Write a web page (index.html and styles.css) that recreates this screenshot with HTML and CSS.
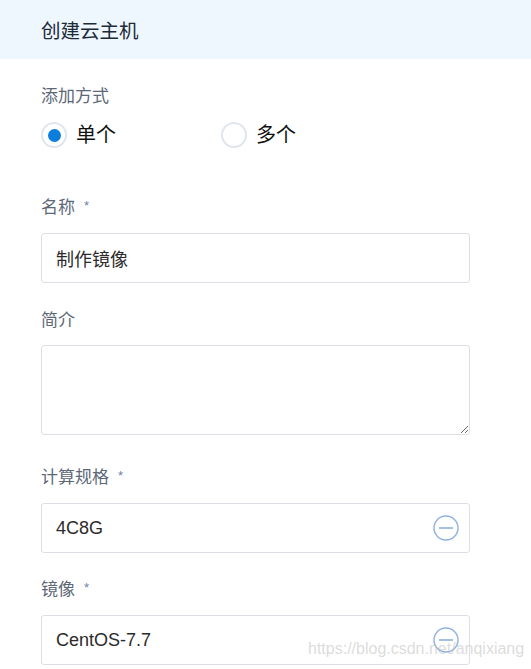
FILE: index.html
```html
<!DOCTYPE html>
<html lang="zh-CN">
<head>
<meta charset="utf-8">
<title>创建云主机</title>
<link rel="stylesheet" href="styles.css">
</head>
<body>
<div class="page">
  <header class="header">创建云主机</header>
  <main class="form">
    <div class="group group-mode">
      <div class="label">添加方式</div>
      <div class="radios">
        <label class="radio checked"><span class="dot"></span><span class="radio-text">单个</span></label>
        <label class="radio"><span class="dot"></span><span class="radio-text">多个</span></label>
      </div>
    </div>
    <div class="group group-name">
      <div class="label">名称<span class="req">*</span></div>
      <div class="input"><span class="value">制作镜像</span></div>
    </div>
    <div class="group group-desc">
      <div class="label">简介</div>
      <textarea class="textarea"></textarea>
    </div>
    <div class="group">
      <div class="label">计算规格<span class="req">*</span></div>
      <div class="input"><span class="value">4C8G</span>
        <svg class="minus" width="26" height="26" viewBox="0 0 26 26"><circle cx="13" cy="13" r="12" fill="none" stroke="#8fb1e2" stroke-width="1.4"/><line x1="6" y1="13" x2="20" y2="13" stroke="#8fb1e2" stroke-width="1.6"/></svg>
      </div>
    </div>
    <div class="group">
      <div class="label">镜像<span class="req">*</span></div>
      <div class="input"><span class="value">CentOS-7.7</span>
        <svg class="minus" width="26" height="26" viewBox="0 0 26 26"><circle cx="13" cy="13" r="12" fill="none" stroke="#8fb1e2" stroke-width="1.4"/><line x1="6" y1="13" x2="20" y2="13" stroke="#8fb1e2" stroke-width="1.6"/></svg>
      </div>
    </div>
  </main>
  <div class="watermark">https://blog.csdn.net/anqixiang</div>
</div>
</body>
</html>
```
FILE: styles.css
```css
* { box-sizing: border-box; }
html, body { margin: 0; padding: 0; background: #fff; }
body {
  font-family: "Liberation Sans", "Noto Sans CJK SC", sans-serif;
  color: #333;
  overflow: hidden;
}
.page { position: relative; width: 531px; height: 669px; overflow: hidden; }
.header {
  height: 59px;
  background: #eef6fe;
  padding-left: 41px;
  display: flex;
  align-items: center;
  font-size: 19.5px;
  color: #1d2a38;
}
.form { padding: 0 41px; width: 511px; }
.group { margin-top: 25px; }
.group-mode { margin-top: 26px; }
.group-name { margin-top: 49px; }
.group-desc { margin-top: 26px; }
.group-desc .label { margin-bottom: 12px; }
.group-desc + .group { margin-top: 31px; }
.label {
  font-size: 17px;
  line-height: 24px;
  height: 24px;
  color: #5d6877;
  margin-bottom: 13px;
  display: flex;
  align-items: flex-start;
}
.req {
  font-size: 13px;
  line-height: 14px;
  color: #6f80a6;
  margin-left: 9px;
  margin-top: 3px;
}
.group-mode .label { margin-bottom: 14px; }
.radios { display: flex; height: 24px; }
.radio { width: 180px; display: flex; align-items: center; gap: 9px; }
.dot {
  width: 26px;
  height: 26px;
  border-radius: 50%;
  border: 2px solid #e0e6ee;
  display: flex;
  align-items: center;
  justify-content: center;
  flex: none;
}
.radio.checked .dot::after {
  content: "";
  width: 13px;
  height: 13px;
  border-radius: 50%;
  background: #0b7ddb;
}
.radio-text { font-size: 20px; color: #111; line-height: 24px; }
.input {
  height: 50px;
  border: 1px solid #dcdfe6;
  border-radius: 3px;
  display: flex;
  align-items: center;
  justify-content: space-between;
  padding: 0 10px 0 14px;
  font-size: 18px;
  color: #2b2b2b;
}
.minus { display: block; }
.textarea {
  display: block;
  width: 429px;
  height: 90px;
  border: 1px solid #dcdfe6;
  border-radius: 3px;
  resize: both;
  margin: 0;
  padding: 8px 14px;
  font: inherit;
}
.watermark {
  position: absolute;
  left: 308px;
  top: 640px;
  font-family: "Liberation Sans", sans-serif;
  font-size: 16px;
  color: rgba(190, 190, 190, 0.55);
  white-space: nowrap;
}
```
